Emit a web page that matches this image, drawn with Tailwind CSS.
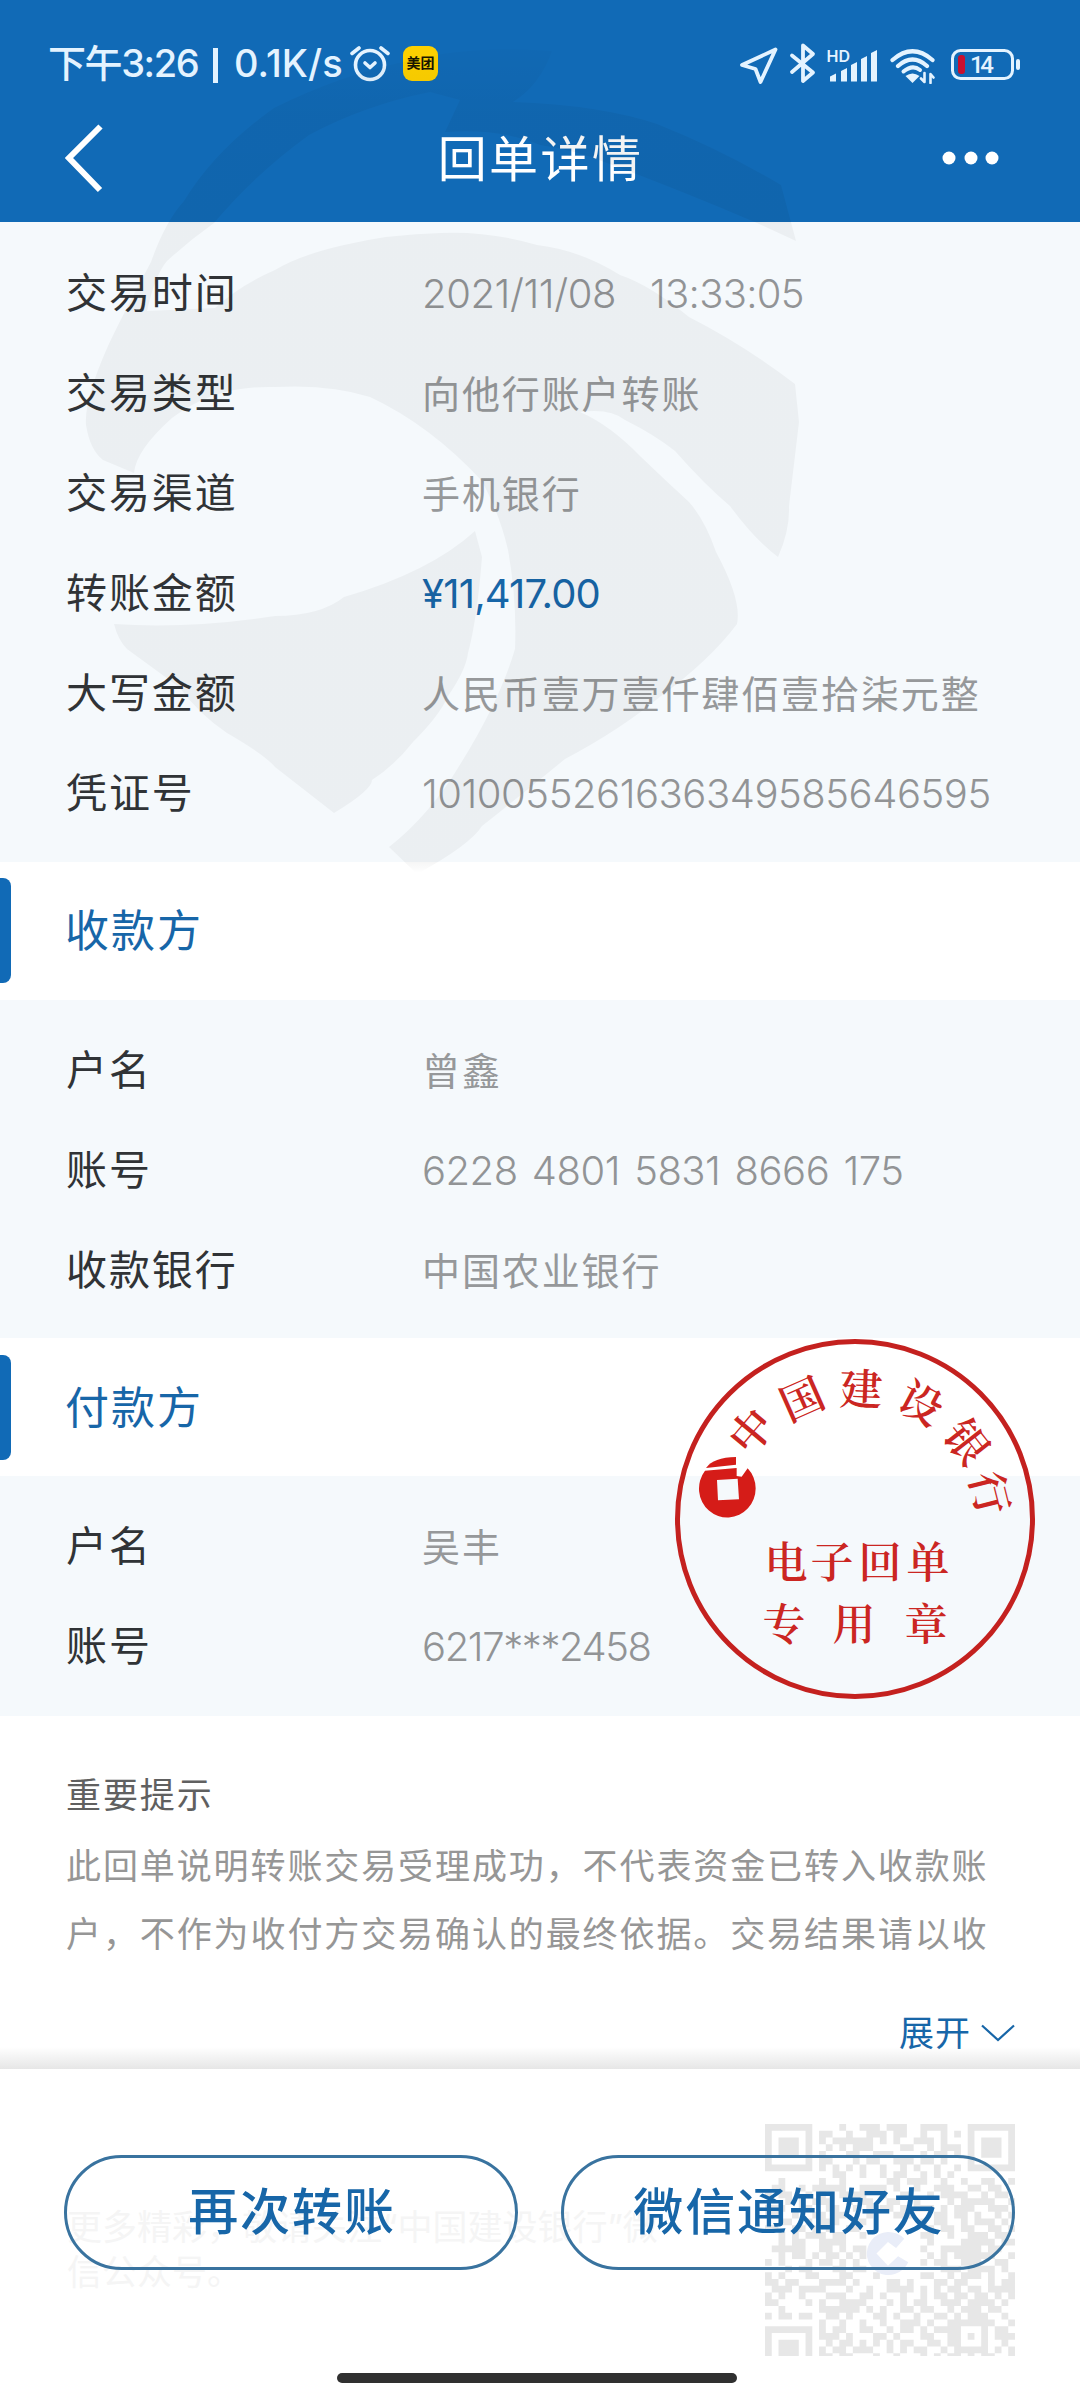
<!DOCTYPE html>
<html lang="zh-CN">
<head>
<meta charset="utf-8">
<title>回单详情</title>
<script src="https://cdn.jsdelivr.net/npm/@tailwindcss/browser@4"></script>
</head>
<body class="bg-white">
<div class="relative flex h-[2400px] w-[1080px] flex-col overflow-hidden bg-white font-['Inter','Noto_Sans_CJK_SC',sans-serif] text-[#303336]">

  <header class="flex h-[222px] flex-col bg-[#116ab6] text-white">
    <div class="flex h-[126px] items-center justify-between pr-[59px] pl-[48px] text-[#e4f3ff]">
      <div class="flex items-center">
        <span class="flex w-[302px] items-center text-[38px] leading-[48px] font-medium whitespace-pre"><span class="w-[165px] tracking-[-1.400px]">下午3:26</span><span class="h-[35px] w-[5px] translate-y-[2px] bg-[#e4f3ff]"></span><span class="pl-[16px] tracking-[0.100px]">0.1K/s</span></span>
        <svg class="h-[40px] w-[40px]" viewBox="0 0 40 40" fill="none" stroke="#e4f3ff" stroke-linecap="round" stroke-linejoin="round"><circle cx="20" cy="22" r="14.5" stroke-width="3.6"/><path d="M2 10.5 9 5M38 10.500 31 5" stroke-width="3.6"/><path d="m15 20 5 4.500 5-4.500" stroke-width="3.6"/></svg>
        <span class="ml-[13px] flex h-[35px] w-[35px] items-center justify-center rounded-[9px] bg-[#fdd000] text-[14px] leading-none font-bold text-[#191600]">美团</span>
      </div>
      <svg class="h-[42px] w-[281px]" viewBox="0 0 281 42" fill="none" stroke="#e4f3ff" stroke-linejoin="round" stroke-linecap="round">
        <path d="M35.500 7.500 2 23l13.500 4L20.500 40z" stroke-width="3.800"/>
        <path d="M52 13.500 73 30.500 63 39V3.500L73 12 52 30" stroke-width="3.800"/>
        <g fill="#e4f3ff" stroke="none"><path d="M90 34.500 96 31.500V39.500H90zM101 29 107 26V39.500H101zM111 23 117 20V39.500H111zM121 17 127 14V39.500H121zM131 11 137 8V39.500H131z"/>
        <text x="86.500" y="19.500" font-family="Inter" font-size="16" font-weight="600">HD</text>
        <path d="M165.500 34q7-5 14 0l-7 7z"/></g>
        <path d="M152.500 18Q172.500 0.500 192.500 18M158 24Q172.500 11 187 24" stroke-width="4.200"/><path d="M163.500 29.500Q172.500 22 180 28" stroke-width="4"/>
        <path d="M184.500 31V40l-3.500-3.500M190.500 41V32l3 3.500" stroke-width="2.600"/>
        <rect x="212.500" y="8.500" width="60" height="28" rx="8" stroke-width="3"/>
        <rect x="218" y="13" width="7" height="19" rx="3" fill="#c8102e" stroke="none"/>
        <rect x="276" y="17" width="4" height="11" rx="2" fill="#e4f3ff" stroke="none"/>
        <text x="230" y="31" font-family="Roboto" font-size="24" font-weight="500" fill="#e4f3ff" stroke="none" textLength="24">14</text>
      </svg>
    </div>
    <div class="flex h-[64px] items-center justify-between pr-[81px] pl-[65px]">
      <svg class="h-[70px] w-[57px]" viewBox="0 0 57 70" fill="none" stroke="#fff" stroke-width="6"><path d="M35.500 3.500 4 35 35 67"/></svg>
      <h1 class="pt-[3px] pl-[17px] text-[49px] leading-[64px] tracking-[2.400px]">回单详情</h1>
      <svg class="h-[14px] w-[57px]" viewBox="0 0 57 14" fill="#fff"><circle cx="7" cy="7" r="6.500"/><circle cx="29" cy="7" r="6.500"/><circle cx="50" cy="7" r="6.500"/></svg>
    </div>
  </header>

  <section class="flex h-[640px] flex-col bg-[#f5f9fc] pt-[22px] pl-[66px] text-[38px] text-[#96989a]">
    <div class="flex h-[100px] items-center"><span class="w-[356px] text-[41px] tracking-[1.900px] text-[#303336]">交易时间</span><span class="flex text-[40px] font-[350] text-[#929496]"><span class="w-[228px] tracking-[-0.400px]">2021/11/08</span><span class="tracking-[-0.700px]">13:33:05</span></span></div>
    <div class="flex h-[100px] items-center"><span class="w-[356px] text-[41px] tracking-[1.900px] text-[#303336]">交易类型</span><span class="tracking-[1.900px]">向他行账户转账</span></div>
    <div class="flex h-[100px] items-center"><span class="w-[356px] text-[41px] tracking-[1.900px] text-[#303336]">交易渠道</span><span class="tracking-[1.900px]">手机银行</span></div>
    <div class="flex h-[100px] items-center"><span class="w-[356px] text-[41px] tracking-[1.900px] text-[#303336]">转账金额</span><span class="text-[40px] tracking-[-0.800px] text-[#1766a8]">¥11,417.00</span></div>
    <div class="flex h-[100px] items-center"><span class="w-[356px] text-[41px] tracking-[1.900px] text-[#303336]">大写金额</span><span class="tracking-[1.900px]">人民币壹万壹仟肆佰壹拾柒元整</span></div>
    <div class="flex h-[100px] items-center"><span class="w-[356px] text-[41px] tracking-[1.900px] text-[#303336]">凭证号</span><span class="text-[40px] font-[350] tracking-[-0.450px] text-[#929496]">1010055261636349585646595</span></div>
  </section>

  <div class="flex h-[138px] items-center">
    <span class="mt-[-1px] h-[105px] w-[11px] rounded-r-[8px] bg-[#116ab6]"></span>
    <h2 class="pl-[54px] text-[44px] leading-[60px] tracking-[2px] text-[#1766a8]">收款方</h2>
  </div>

  <section class="flex h-[338px] flex-col bg-[#f5f9fc] pt-[21px] pl-[66px] text-[38px] text-[#96989a]">
    <div class="flex h-[100px] items-center"><span class="w-[356px] text-[41px] tracking-[1.900px] text-[#303336]">户名</span><span class="tracking-[1.900px]">曾鑫</span></div>
    <div class="flex h-[100px] items-center"><span class="w-[356px] text-[41px] tracking-[1.900px] text-[#303336]">账号</span><span class="text-[40px] font-[350] tracking-[-0.500px] [word-spacing:3.500px] text-[#929496]">6228 4801 5831 8666 175</span></div>
    <div class="flex h-[100px] items-center"><span class="w-[356px] text-[41px] tracking-[1.900px] text-[#303336]">收款银行</span><span class="tracking-[1.900px]">中国农业银行</span></div>
  </section>

  <div class="flex h-[138px] items-center">
    <span class="h-[105px] w-[11px] rounded-r-[8px] bg-[#116ab6]"></span>
    <h2 class="pt-[2px] pl-[54px] text-[44px] leading-[60px] tracking-[2px] text-[#1766a8]">付款方</h2>
  </div>

  <section class="flex h-[240px] flex-col bg-[#f5f9fc] pt-[21px] pl-[66px] text-[38px] text-[#96989a]">
    <div class="flex h-[100px] items-center"><span class="w-[356px] text-[41px] tracking-[1.900px] text-[#303336]">户名</span><span class="tracking-[1.900px]">吴丰</span></div>
    <div class="flex h-[100px] items-center"><span class="w-[356px] text-[41px] tracking-[1.900px] text-[#303336]">账号</span><span class="text-[40px] font-[350] tracking-[-1.400px] text-[#929496]">6217***2458</span></div>
  </section>

  <section class="flex h-[353px] flex-col pt-[52px] pl-[66px] text-[35px] tracking-[1.900px]">
    <h3 class="leading-[54px] text-[#606060]">重要提示</h3>
    <p class="mt-[11px] leading-[67.500px] text-[#969696]">此回单说明转账交易受理成功，不代表资金已转入收款账<br>户，不作为收付方交易确认的最终依据。交易结果请以收</p>
    <div class="mt-[39px] flex items-center justify-end gap-[9px] pr-[64px] text-[#1766a8]">
      <span class="leading-[52px] tracking-[1px]">展开</span>
      <svg class="h-[20px] w-[36px]" viewBox="0 0 36 20" fill="none" stroke="#1766a8" stroke-width="2.200"><path d="M2 2.500 18 17 34 2.500"/></svg>
    </div>
  </section>

  <footer class="relative flex flex-1 flex-col">
    <div class="absolute -top-[22px] left-0 h-[22px] w-full bg-linear-to-b from-white/0 to-[#e6e6e6]"></div>
    <p class="absolute top-[136px] left-[67px] w-[640px] text-[35px] leading-[45px] whitespace-pre text-[#f5f5f5]">更多精彩，敬请关注“中国建设银行”微<br>信公众号。</p>
    <svg class="absolute top-[55px] left-[765px] h-[232px] w-[250px]" viewBox="0 0 37 34.400" preserveAspectRatio="none">
      <path id="qr" fill="#e7e7e7"/>
      <g id="qr-logo"><path d="M20.600 17A3.200 3.200 0 1 0 21.200 20.500L19.700 19.600 18.200 21 16.500 19.200 18.200 17.500 19.400 18.400z" fill="#e9edf8"/></g>
    </svg>
    <div class="relative mt-[86px] flex h-[115px] gap-[43px] pl-[64px] text-[50px] leading-none font-medium tracking-[1.900px] text-[#1766a8]">
      <button class="flex w-[454px] items-center justify-center rounded-full border-[3px] border-[#39739f] pb-[2px] pl-[2px]">再次转账</button>
      <button class="flex w-[454px] items-center justify-center rounded-full border-[3px] border-[#39739f] pb-[2px] pl-[2px]">微信通知好友</button>
    </div>
    <div class="mt-auto mr-[7px] mb-[17px] h-[10px] w-[400px] self-center rounded-full bg-[#303030]"></div>
  </footer>

  <!-- watermark -->
  <svg class="pointer-events-none absolute top-0 left-0 h-[900px] w-[1080px]" viewBox="0 0 1080 900" fill="url(#wm)">
    <defs><linearGradient id="wm" gradientUnits="userSpaceOnUse" x1="0" y1="0" x2="0" y2="900"><stop offset="0.04" stop-opacity="0.01"/><stop offset="0.13" stop-opacity="0.045"/><stop offset="0.247" stop-opacity="0.05"/><stop offset="0.25" stop-opacity="0.04"/><stop offset="0.957" stop-opacity="0.04"/><stop offset="0.97" stop-opacity="0"/></linearGradient></defs>
    <path d="M552 51Q470 45 408 61 340 75 274 108 215 150 184 201 165 222 151 262 120 320 108 346 84 400 86 425 90 450 103 460L134 473Q136 450 172 418 215 385 275 387 330 384 370 397 430 425 482 481 500 515 508 550 517 600 515 649 500 700 461 763 430 815 389 847L417 874Q470 845 482 826 515 800 565 759 620 730 661 696 710 660 737 624 742 600 716 552 705 520 689 502 665 480 640 456 610 425 580 412 610 408 625 420 655 435 675 451 705 485 730 506 755 540 778 557 790 530 789 506L799 422 795 384Q744 345 689 317 650 285 620 275 580 250 537 245 490 231 441 233 390 234 344 245 300 255 275 270 240 285 215 308L147 311Q155 275 167 261 190 240 214 223 254 175 309 135 365 105 430 92L460 100 445 132Q500 128 540 145 575 150 607 163 680 190 757 223L796 241 781 185Q722 150 657 124 600 105 513 102 540 85 552 51z"/>
    <path d="M475 531Q430 572 344 597 320 616 275 616 190 629 114 624 118 640 127 649L179 687Q200 715 227 733 265 755 275 767L334 813Q372 790 372 780 395 765 413 742 440 715 448 696 466 670 468 653 477 620 482 557z"/>
  </svg>

  <!-- seal -->
  <svg class="absolute top-[1338px] left-[674px] h-[362px] w-[362px]" viewBox="674 1338 362 362" fill="#cb2622">
    <circle cx="855" cy="1519" r="177.500" fill="none" stroke="#c4211f" stroke-width="5"/>
    <g font-family="'Noto Serif CJK SC','Noto Sans CJK SC',serif" font-size="43" font-weight="600" text-anchor="middle">
      <text transform="translate(751 1431) rotate(-50)" y="16">中</text>
      <text transform="translate(802 1399) rotate(-24)" y="16">国</text>
      <text transform="translate(861 1389) rotate(2)" y="16">建</text>
      <text transform="translate(921 1403) rotate(28)" y="16">设</text>
      <text transform="translate(967 1442) rotate(52)" y="16">银</text>
      <text transform="translate(990 1493) rotate(76)" y="16">行</text>
      <text y="1578" x="786 832 880 928">电子回单</text>
      <text y="1640" x="784 854 926">专用章</text>
    </g>
    <g transform="translate(660 1320) scale(.3333)" fill="#d51c18">
      <path fill-rule="evenodd" d="M135 452 230 444V468L245 470 263 445A85 87 0 1 1 135 452zM171 480 174 541 237 538 233 476z"/>
      <path d="M138 444Q160 412 228 411V434z"/>
    </g>
  </svg>
</div>
<script>
  const rows = [
    "1111111000010011101110011110001111111",
    "1000001011001001110110010010101000001",
    "1011101010111111010100111010001011101",
    "1011101001010111000011001011101011101",
    "1011101010001100111000010110101011101",
    "1000001011000101100111011010001000001",
    "1111111010101010010010100100101111111",
    "0000000000110010010110010101000000000",
    "0010000010010000001101110010010011001",
    "0110010111110011110100100111001101100",
    "1011001010011110010011001011110010110",
    "0001010111001011001100100001011111001",
    "1110011001100101011010111010111001110",
    "1100100110110001000111000110110100101",
    "0011001011100110000000010110010111010",
    "1100110101001100000000001011011001101",
    "0010101110110010000000011001001110110",
    "0010110011110000000000001000011111011",
    "0111110011010110000000010011111101100",
    "0010110101101010000000001010111111001",
    "1010001011010100000000010110011100110",
    "0001011000110110000000000011101111010",
    "1010001100011000100000011001011101001",
    "1101100011110100001101000110110001011",
    "0111011110001001001111010101101101111",
    "1010010001110011010010010110110110101",
    "1100001010011110001010110011101111010",
    "0010000011111101010011011001011101100",
    "1011011001101000110100100110101110010",
    "0000000010010010010011101001111111001",
    "1111111010110011001011010111100010110",
    "1000001011101000110100011001101010111",
    "1011101001011010101011001101100010010",
    "1011101010110111001010110010111110101",
    "1011101011011000100100010101101011001"
  ];
  document.getElementById("qr").setAttribute("d",
    rows.map((r, y) => [...r].map((c, x) => c === "1" ? `M${x} ${y}h1v1h-1z` : "").join("")).join(""));
</script>
</body>
</html>
